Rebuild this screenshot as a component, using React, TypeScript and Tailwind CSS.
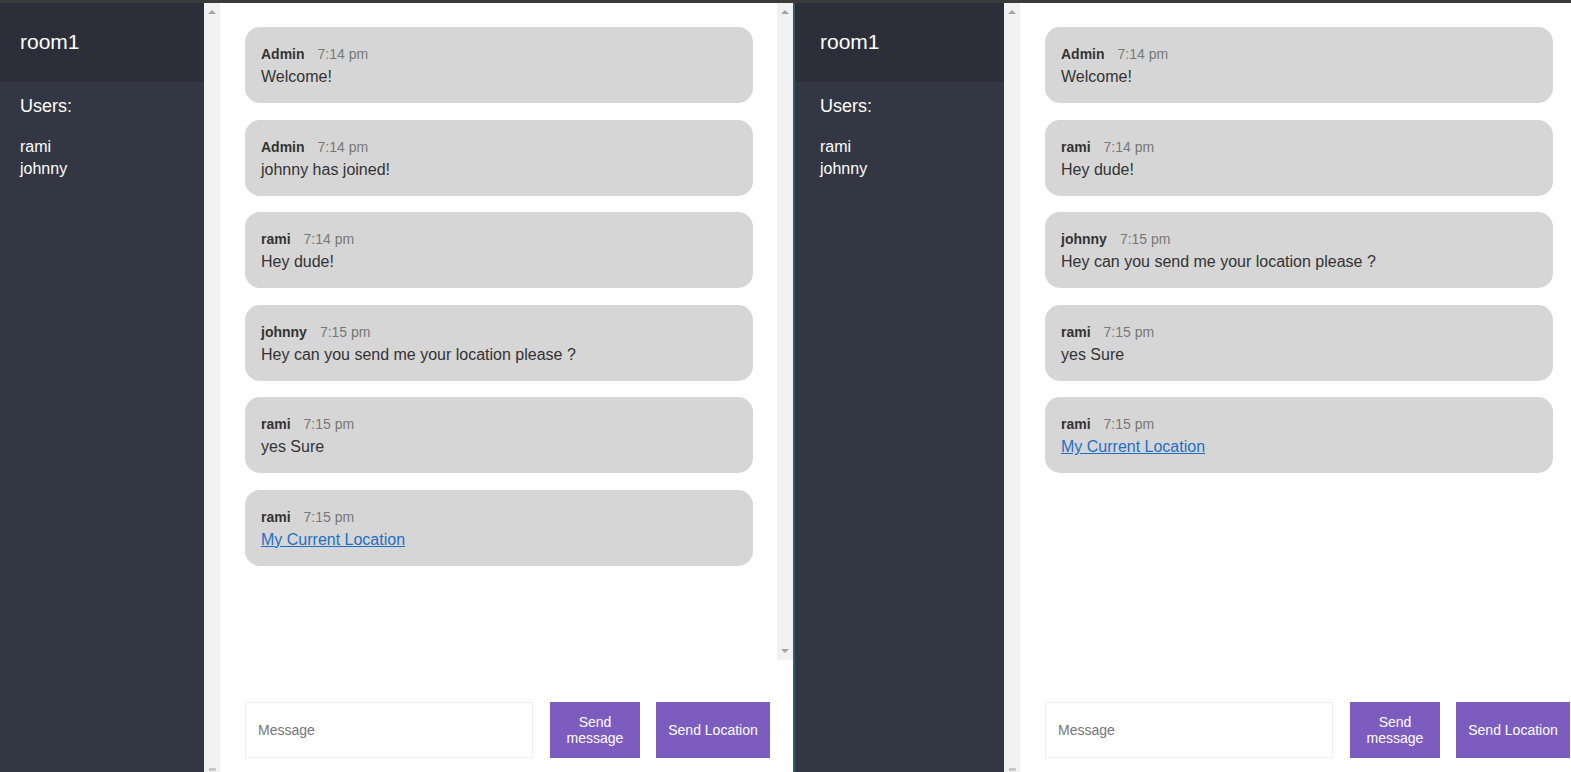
import clsx from "clsx";

interface Message {
  name: string;
  time: string;
  text: string;
  link?: boolean;
}

const LEFT_MESSAGES: Message[] = [
  { name: "Admin", time: "7:14 pm", text: "Welcome!" },
  { name: "Admin", time: "7:14 pm", text: "johnny has joined!" },
  { name: "rami", time: "7:14 pm", text: "Hey dude!" },
  { name: "johnny", time: "7:15 pm", text: "Hey can you send me your location please ?" },
  { name: "rami", time: "7:15 pm", text: "yes Sure" },
  { name: "rami", time: "7:15 pm", text: "My Current Location", link: true },
];

const RIGHT_MESSAGES: Message[] = [
  { name: "Admin", time: "7:14 pm", text: "Welcome!" },
  { name: "rami", time: "7:14 pm", text: "Hey dude!" },
  { name: "johnny", time: "7:15 pm", text: "Hey can you send me your location please ?" },
  { name: "rami", time: "7:15 pm", text: "yes Sure" },
  { name: "rami", time: "7:15 pm", text: "My Current Location", link: true },
];

const USERS = ["rami", "johnny"];

function ArrowUp() {
  return <span className="block h-0 w-0 border-x-[4px] border-b-[4px] border-x-transparent border-b-[#a3a3a3]" />;
}

function ArrowDown() {
  return <span className="block h-0 w-0 border-x-[4px] border-t-[4px] border-x-transparent border-t-[#a3a3a3]" />;
}

function Bubble({ msg }: { msg: Message }) {
  return (
    <div className="h-[76px] shrink-0 rounded-[15px] bg-[#d6d6d6] px-4 pt-[17px] text-[#333]">
      <p className="flex items-baseline gap-[13px] leading-[20px]">
        <span className="text-[14px] font-bold">{msg.name}</span>
        <span className="text-[14px] text-[#777]">{msg.time}</span>
      </p>
      {msg.link ? (
        <a href="#" className="mt-[2px] block text-[16px] leading-[22px] text-[#1f6fc4] underline">
          {msg.text}
        </a>
      ) : (
        <p className="mt-[2px] text-[16px] leading-[22px]">{msg.text}</p>
      )}
    </div>
  );
}

function ChatWindow({ messages, className }: { messages: Message[]; className?: string }) {
  return (
    <div className={clsx("flex h-full shrink-0", className)}>
      {/* Sidebar */}
      <aside className="w-[209px] shrink-0 bg-[#333744] text-white">
        <h2 className="h-[79px] bg-[#2c2f3a] pl-[25px] pt-[27px] text-[21px] leading-[24px]">room1</h2>
        <h3 className="pl-[25px] pt-[14px] text-[18px] leading-[21px]">Users:</h3>
        <ul className="pl-[25px] pt-[19px] text-[16px] leading-[22px]">
          {USERS.map((u) => (
            <li key={u}>{u}</li>
          ))}
        </ul>
      </aside>

      {/* sidebar scrollbar strip */}
      <div className="flex w-[16px] shrink-0 flex-col items-center justify-between bg-[#f1f1f1]">
        <div className="flex h-[18px] items-center">
          <ArrowUp />
        </div>
        <div className="mb-[1px] h-[3px] w-[7px] bg-[#c8c8c8]" />
      </div>

      {/* Chat */}
      <main className="flex w-[573px] shrink-0 flex-col bg-white">
        <div className="flex h-[657px] shrink-0">
          <div className="flex flex-1 flex-col gap-[16.6px] pl-[25px] pr-[24px] pt-[24px]">
            {messages.map((m, i) => (
              <Bubble key={i} msg={m} />
            ))}
          </div>
          <div className="flex w-[16px] shrink-0 flex-col items-center justify-between bg-[#f1f1f1]">
            <div className="flex h-[18px] items-center">
              <ArrowUp />
            </div>
            <div className="flex h-[16px] items-center pb-[2px]">
              <ArrowDown />
            </div>
          </div>
        </div>

        <form className="flex pl-[25px] pr-[23px] pt-[42px]" onSubmit={(e) => e.preventDefault()}>
          <input
            placeholder="Message"
            className="mr-[17px] h-[56px] min-w-0 flex-1 border border-[#eeeeee] px-3 text-[14px] text-[#333] outline-none placeholder:text-[#757575]"
          />
          <button
            type="button"
            className="flex h-[56px] w-[90px] shrink-0 items-center justify-center bg-[#7c5cbf] px-3 text-center text-[14px] leading-[16px] text-white"
          >
            Send message
          </button>
          <button
            type="button"
            className="ml-4 flex h-[56px] w-[114px] shrink-0 items-center justify-center bg-[#7c5cbf] px-3 text-[14px] leading-[16px] whitespace-nowrap text-white"
          >
            Send Location
          </button>
        </form>
      </main>
    </div>
  );
}

export default function App() {
  return (
    <div className="flex h-[772px] w-[1571px] flex-col overflow-hidden bg-white font-['Liberation_Sans',Arial,sans-serif]">
      <div className="h-[3px] shrink-0 bg-[#3b3b3b]" />
      <div className="flex min-h-0 flex-1 overflow-hidden">
        <ChatWindow messages={LEFT_MESSAGES} className="-ml-[5px]" />
        <div className="w-[2px] shrink-0 bg-[#2a6066]" />
        <ChatWindow messages={RIGHT_MESSAGES} />
      </div>
    </div>
  );
}
